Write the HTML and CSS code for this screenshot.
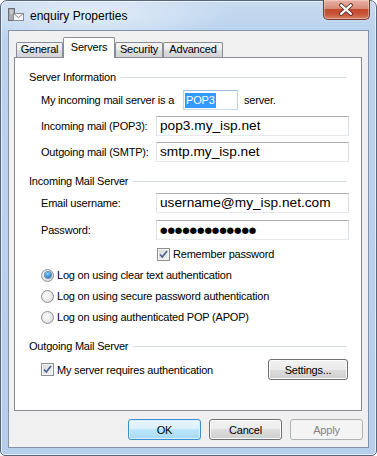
FILE: index.html
```html
<!DOCTYPE html>
<html lang="en">
<head>
    <meta charset="UTF-8">
    <title>enquiry Properties</title>
    <link rel="stylesheet" href="styles.css">
</head>
<body>
    <div class="window">
        <div class="titlebar">
            <svg class="app-icon" viewBox="0 0 16 14">
                <rect x="0.5" y="0.5" width="6" height="12" fill="#a8acb0" stroke="#6b6f74"/>
                <line x1="2" y1="3" x2="5" y2="3" stroke="#e8e8e8"/>
                <line x1="2" y1="5" x2="5" y2="5" stroke="#e8e8e8"/>
                <rect x="5.5" y="5.5" width="10" height="7" fill="#f6f6f6" stroke="#8a8d91"/>
                <path d="M5.5 5.5 L10.5 9.5 L15.5 5.5" fill="none" stroke="#8a8d91"/>
            </svg>
            <span class="title">enquiry Properties</span>
            <div class="close">
                <svg viewBox="0 0 47 20" width="47" height="20">
                    <path d="M18.5 5 L28.5 14 M28.5 5 L18.5 14" stroke="#4a2a24" stroke-width="4" stroke-linecap="round"/>
                    <path d="M18.5 5 L28.5 14 M28.5 5 L18.5 14" stroke="#ffffff" stroke-width="2.2" stroke-linecap="round"/>
                </svg>
            </div>
        </div>
        <div class="client">
            <div class="tabs">
                <div class="tab tab-general">General</div>
                <div class="tab tab-servers active">Servers</div>
                <div class="tab tab-security">Security</div>
                <div class="tab tab-advanced">Advanced</div>
            </div>
            <div class="panel">
                <div class="group">Server Information</div>
                <div class="row field-row first">
                    <span class="pop-label">My incoming mail server is a</span>
                    <span class="pop-box"><span class="selected">POP3</span></span>
                    <span class="after">server.</span>
                </div>
                <div class="row field-row">
                    <span class="label">Incoming mail (POP3):</span>
                    <div class="field">pop3.my_isp.net</div>
                </div>
                <div class="row field-row">
                    <span class="label">Outgoing mail (SMTP):</span>
                    <div class="field">smtp.my_isp.net</div>
                </div>

                <div class="group group-mid">Incoming Mail Server</div>
                <div class="row field-row email">
                    <span class="label">Email username:</span>
                    <div class="field">username@my_isp.net.com</div>
                </div>
                <div class="row field-row password">
                    <span class="label">Password:</span>
                    <div class="field dots">●●●●●●●●●●●●●</div>
                </div>
                <div class="row option remember">
                    <span class="checkbox"><svg viewBox="0 0 11 11"><path d="M2 5.5 L4.3 8 L9 2" fill="none" stroke="#4c6190" stroke-width="1.7"/></svg></span>
                    <span>Remember password</span>
                </div>
                <div class="row option radio-first">
                    <span class="radio on"></span>
                    <span>Log on using clear text authentication</span>
                </div>
                <div class="row option">
                    <span class="radio"></span>
                    <span>Log on using secure password authentication</span>
                </div>
                <div class="row option">
                    <span class="radio"></span>
                    <span>Log on using authenticated POP (APOP)</span>
                </div>

                <div class="group group-last">Outgoing Mail Server</div>
                <div class="row last-row">
                    <span class="checkbox"><svg viewBox="0 0 11 11"><path d="M2 5.5 L4.3 8 L9 2" fill="none" stroke="#4c6190" stroke-width="1.7"/></svg></span>
                    <span>My server requires authentication</span>
                    <button class="btn settings">Settings...</button>
                </div>
            </div>
            <div class="footer">
                <button class="btn default">OK</button>
                <button class="btn">Cancel</button>
                <button class="btn" disabled>Apply</button>
            </div>
        </div>
    </div>
</body>
</html>
```

FILE: styles.css
```css
body {
    margin: 0;
    background-color: #fff;
    font-family: 'Liberation Sans', Arial, sans-serif;
    font-size: 11px;
    letter-spacing: -0.2px;
    color: #000;
}
.window {
    width: 377px;
    height: 456px;
    box-sizing: border-box;
    border: 1px solid #56677e;
    border-radius: 7px 7px 5px 5px;
    background:
        radial-gradient(ellipse 140px 30px at 90px 14px, rgba(232, 241, 250, 0.85), rgba(232, 241, 250, 0) 100%),
        linear-gradient(180deg, #c8dbf1 0, #bbd3ed 30px, #b7cfea 100%);
    box-shadow: inset 0 0 0 1px rgba(255, 255, 255, 0.6);
    display: flex;
    flex-direction: column;
}
.titlebar {
    height: 29px;
    display: flex;
    align-items: flex-start;
}
.app-icon {
    width: 16px;
    height: 14px;
    margin: 7px 0 0 7px;
}
.title {
    margin: 7px 0 0 6px;
    font-size: 12px;
    letter-spacing: 0;
    line-height: 16px;
}
.close {
    margin: -1px 6px 0 auto;
    width: 47px;
    height: 20px;
    box-sizing: border-box;
    border: 1px solid #7a3a30;
    border-top: none;
    border-radius: 0 0 5px 5px;
    background: linear-gradient(180deg, #e9b3a6 0, #d98a79 45%, #c4492f 50%, #c9553a 75%, #d6826a 100%);
    box-shadow: inset 0 0 0 1px rgba(255, 220, 210, 0.45);
    display: flex;
}
.close svg {
    margin: 0 0 0 -1px;
}
.client {
    flex: 1;
    margin: 0 7px 7px;
    border: 1px solid #8593a8;
    background-color: #f0f0f0;
    padding: 0 6px 0 5px;
    display: flex;
    flex-direction: column;
}
.tabs {
    display: flex;
    align-items: flex-end;
    padding: 6px 0 0 2px;
    height: 20px;
}
.tab {
    height: 15px;
    box-sizing: border-box;
    border: 1px solid #898c95;
    border-bottom: none;
    border-radius: 2px 2px 0 0;
    background: linear-gradient(180deg, #f3f3f3 0, #ebebeb 50%, #dedede 50%, #d2d2d2 100%);
    text-align: center;
    line-height: 12px;
}
.tab-general { width: 47px; }
.tab-servers { width: 52px; }
.tab-security { width: 48px; }
.tab-advanced { width: 60px; }
.tab.active {
    height: 21px;
    margin-bottom: -1px;
    background: #fff;
    position: relative;
    z-index: 1;
    line-height: 18px;
}
.panel {
    height: 354px;
    box-sizing: border-box;
    border: 1px solid #898c95;
    background-color: #fff;
    padding: 11px 14px 0 14px;
}
.group {
    display: flex;
    align-items: center;
    height: 16px;
}
.group::after {
    content: "";
    flex: 1;
    height: 1px;
    background-color: #d5dfe5;
    margin-left: 5px;
}
.group-mid { margin-top: 11px; }
.group-last { margin-top: 13px; }
.row {
    display: flex;
    align-items: center;
    padding-left: 12px;
}
.field-row {
    height: 20px;
    margin-top: 6px;
}
.field-row.first { margin-top: 5px; }
.field-row.email { margin-top: 4px; }
.field-row.password { margin-top: 7px; }
.label {
    width: 115px;
    flex-shrink: 0;
}
.field {
    width: 193px;
    height: 20px;
    flex-shrink: 0;
    box-sizing: border-box;
    border: 1px solid;
    border-color: #abadb3 #dbdfe6 #e3e9ef #e2e3ea;
    padding: 0 3px;
    font-size: 13.7px;
    letter-spacing: 0;
    line-height: 18px;
    white-space: nowrap;
}
.field.dots {
    font-family: 'DejaVu Sans', sans-serif;
    font-size: 8.6px;
    letter-spacing: -0.1px;
    line-height: 18px;
}
.pop-label {
    width: 142px;
    flex-shrink: 0;
}
.pop-box {
    width: 55px;
    height: 20px;
    box-sizing: border-box;
    border: 1px solid;
    border-color: #9ebcdb #bcd3ea #c8dbee #bcd3ea;
    padding: 2px 0 0 1px;
}
.pop-box .selected {
    display: inline-block;
    background-color: #3399ff;
    color: #fff;
    line-height: 15px;
    padding: 0 1px;
}
.after { margin-left: 6px; }
.option {
    height: 16px;
    margin-top: 5px;
}
.remember {
    margin-top: 6px;
    padding-left: 128px;
}
.checkbox {
    width: 13px;
    height: 13px;
    box-sizing: border-box;
    flex-shrink: 0;
    border: 1px solid #8e8f8f;
    background: linear-gradient(135deg, #d4d6da 0, #f6f6f6 100%);
    box-shadow: inset 0 0 0 1px #f5f5f5;
    margin-right: 3px;
    display: flex;
}
.checkbox svg {
    width: 11px;
    height: 11px;
}
.radio {
    width: 13px;
    height: 13px;
    box-sizing: border-box;
    flex-shrink: 0;
    border: 1px solid #8f9091;
    border-radius: 50%;
    background: radial-gradient(circle at 40% 40%, #ffffff 0, #e9e9e9 50%, #cfcfcf 100%);
    margin-right: 3px;
    display: flex;
    align-items: center;
    justify-content: center;
}
.radio.on::after {
    content: "";
    width: 6px;
    height: 6px;
    border-radius: 50%;
    background: radial-gradient(circle at 45% 35%, #a8e1ff 0, #3d97dd 45%, #1d5a94 100%);
    box-shadow: 0 0 0 1px #6f8fb0;
}
.last-row {
    height: 21px;
    margin-top: 5px;
}
.btn {
    height: 21px;
    box-sizing: border-box;
    border: 1px solid #707070;
    border-radius: 3px;
    background: linear-gradient(180deg, #f2f2f2 0, #ebebeb 50%, #dddddd 50%, #cfcfcf 100%);
    box-shadow: inset 0 0 0 1px #fcfcfc;
    font-family: 'Liberation Sans', Arial, sans-serif;
    font-size: 11px;
    letter-spacing: -0.2px;
    color: #000;
    padding: 0;
}
.settings {
    width: 80px;
    margin-left: auto;
    margin-right: -1px;
}
.footer {
    display: flex;
    justify-content: flex-end;
    gap: 8px;
    margin: 8px -1px 0 0;
}
.footer .btn {
    width: 73px;
}
.btn.default {
    border-color: #3c8fd0;
    background: linear-gradient(180deg, #eaf6fd 0, #d9f0fc 50%, #bee6fd 50%, #a7d9f5 100%);
    box-shadow: inset 0 0 0 1px #d6f0fd;
}
.btn:disabled {
    border-color: #adb2b5;
    background: #f4f4f4;
    box-shadow: none;
    color: #838383;
}
```
